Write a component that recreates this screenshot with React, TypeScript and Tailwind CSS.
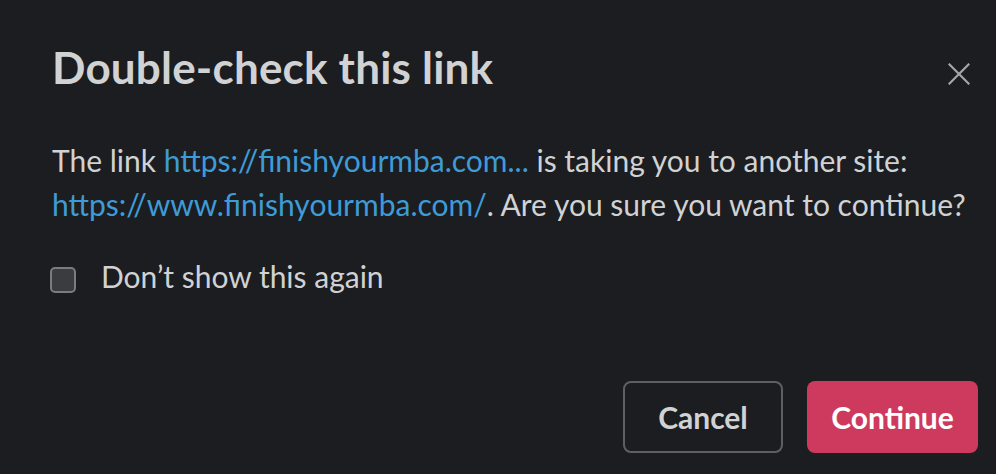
export default function App() {
  return (
    <div className="w-[996px] h-[474px] bg-[#1b1d21] text-[#d1d2d3] font-['Lato','Liberation_Sans',sans-serif] flex flex-col overflow-hidden">
      {/* Header */}
      <div className="flex items-start justify-between pl-[52px] pr-[26px] pt-[41px]">
        <h1 className="text-[44px] leading-[1.2] font-bold tracking-[0.2px] text-[#d1d2d3]">Double-check this link</h1>
        <button className="mt-[22px] w-[22px] h-[22px] text-[#a4a5a7]">
          <svg viewBox="0 0 22 22" width="22" height="22" fill="none" stroke="currentColor" strokeWidth="2.2" strokeLinecap="square">
            <path d="M1.5 1.5L20.5 20.5M20.5 1.5L1.5 20.5" />
          </svg>
        </button>
      </div>

      {/* Body */}
      <div className="pl-[52px] pr-[30px] mt-[44px]">
        <p className="text-[30px] leading-[44px]">
          The link <a className="text-[#3f9bd6]">https://finishyourmba.com...</a> is taking you to another site:{' '}
          <a className="text-[#3f9bd6]">https://www.finishyourmba.com/</a>. Are you sure you want to continue?
        </p>

        <label className="flex items-start gap-[25px] mt-[28px] -ml-[2px]">
          <span className="mt-[13px] w-[26px] h-[26px] rounded-[5px] border-2 border-[#7b7c7e] bg-[#3b3c3f] shrink-0" />
          <span className="text-[30px] leading-[44px]">Don’t show this again</span>
        </label>
      </div>

      {/* Footer */}
      <div className="mt-auto mb-[21px] pr-[18px] flex justify-end gap-[24px]">
        <button className="w-[160px] h-[72px] rounded-[8px] border-2 border-[#5e5f62] text-[30px] font-bold text-[#d1d2d3]">
          Cancel
        </button>
        <button className="w-[171px] h-[72px] rounded-[8px] bg-[#cd3a5e] text-[30px] font-bold text-white">
          Continue
        </button>
      </div>
    </div>
  );
}
